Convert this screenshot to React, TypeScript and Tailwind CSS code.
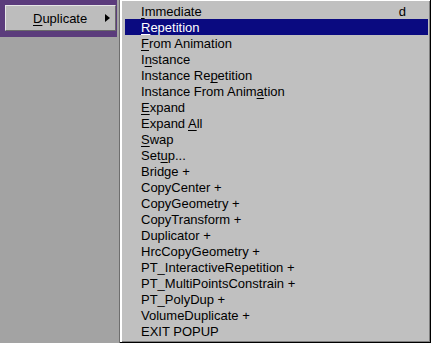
const items: { label: string; u?: number; key?: string }[] = [
  { label: "Immediate", u: 0, key: "d" },
  { label: "Repetition", u: 0 },
  { label: "From Animation", u: 0 },
  { label: "Instance", u: 1 },
  { label: "Instance Repetition", u: 11 },
  { label: "Instance From Animation", u: 18 },
  { label: "Expand", u: 0 },
  { label: "Expand All", u: 7 },
  { label: "Swap", u: 0 },
  { label: "Setup...", u: 3 },
  { label: "Bridge +" },
  { label: "CopyCenter +" },
  { label: "CopyGeometry +" },
  { label: "CopyTransform +" },
  { label: "Duplicator +" },
  { label: "HrcCopyGeometry +" },
  { label: "PT_InteractiveRepetition +" },
  { label: "PT_MultiPointsConstrain +" },
  { label: "PT_PolyDup +" },
  { label: "VolumeDuplicate +" },
  { label: "EXIT POPUP" },
];

function Label({ text, u }: { text: string; u?: number }) {
  if (u === undefined) return <span>{text}</span>;
  return (
    <span>
      {text.slice(0, u)}
      <span className="underline underline-offset-2">{text[u]}</span>
      {text.slice(u + 1)}
    </span>
  );
}

export default function App() {
  return (
    <div
      className="flex w-[431px] h-[343px] bg-[#a3a3a3] text-[13px] text-black overflow-hidden"
      style={{ fontFamily: '"Liberation Sans", Arial, sans-serif' }}
    >
      <div className="w-[119px] flex flex-col">
        <div className="w-[117px] h-[37px] bg-[#5b3c7c] pt-[5px] pl-[5px]">
          <div className="relative w-[111px] h-[26px] bg-[#bdbdbd] border-t border-l border-[#e6e6e6] border-r border-b border-r-[#6a6a6a] border-b-[#6a6a6a] flex items-center pt-[2px]">
            <span className="ml-[27px]">
              <span className="underline underline-offset-2">D</span>uplicate
            </span>
            <span className="absolute right-[5px] top-[8px] w-0 h-0 border-y-[4px] border-y-transparent border-l-[5px] border-l-black" />
          </div>
        </div>
      </div>
      <div className="w-px bg-[#6e6e6e]" />
      <div className="flex-1 bg-[#c0c0c0] border-r border-b border-black shadow-[inset_1px_1px_0_#ffffff,inset_2px_0_0_#ffffff,inset_-1px_-1px_0_#7f7f7f] pt-[3px] pl-[5px] pr-[2px]">
        {items.map((it, i) => (
          <div
            key={it.label}
            className={`flex h-[16px] items-center pt-[2px] pl-[16px] pr-[22px] ${
              i === 1 ? "bg-[#0a0a80] text-white" : ""
            }`}
          >
            <Label text={it.label} u={it.u} />
            {it.key && <span className="ml-auto">{it.key}</span>}
          </div>
        ))}
      </div>
    </div>
  );
}
